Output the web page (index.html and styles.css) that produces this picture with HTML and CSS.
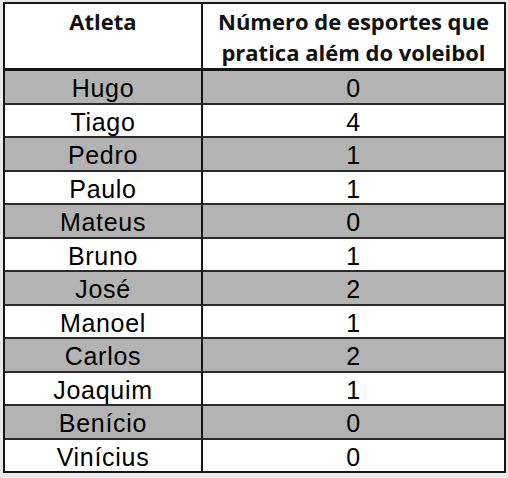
FILE: index.html
```html
<!DOCTYPE html>
<html lang="pt">
<head>
<meta charset="utf-8">
<link rel="stylesheet" href="styles.css">
</head>
<body>
<div class="wrap">
<table class="sports">
  <thead>
    <tr>
      <th class="c1">Atleta</th>
      <th class="c2">Número de esportes que<br>pratica além do voleibol</th>
    </tr>
  </thead>
  <tbody>
    <tr class="g"><td>Hugo</td><td>0</td></tr>
    <tr><td>Tiago</td><td>4</td></tr>
    <tr class="g"><td>Pedro</td><td>1</td></tr>
    <tr><td>Paulo</td><td>1</td></tr>
    <tr class="g"><td>Mateus</td><td>0</td></tr>
    <tr><td>Bruno</td><td>1</td></tr>
    <tr class="g"><td>José</td><td>2</td></tr>
    <tr><td>Manoel</td><td>1</td></tr>
    <tr class="g"><td>Carlos</td><td>2</td></tr>
    <tr><td>Joaquim</td><td>1</td></tr>
    <tr class="g"><td>Benício</td><td>0</td></tr>
    <tr><td>Vinícius</td><td>0</td></tr>
  </tbody>
</table>
</div>
</body>
</html>
```

FILE: styles.css
```css
html, body {
  margin: 0;
  padding: 0;
  background: #e9e9e9;
  width: 508px;
  height: 478px;
  overflow: hidden;
}
.wrap {
  padding: 2px 0 0 3px;
}
.sports {
  border-collapse: separate;
  border-spacing: 0;
  width: 503px;
  border: 2px solid #151515;
  background: #fff;
  table-layout: fixed;
}
.sports th {
  font-family: "Open Sans", Lato, sans-serif;
  font-weight: 700;
  font-size: 22px;
  line-height: 31px;
  color: #111;
  height: 62px;
  padding: 2px 0 0;
  border-bottom: 3px solid #151515;
  vertical-align: top;
}
.sports th.c1, .sports td:first-child {
  width: 196px;
  border-right: 2px solid #151515;
}
.sports td {
  font-family: "Liberation Sans", Arial, sans-serif;
  font-size: 25px;
  letter-spacing: 0.7px;
  color: #000;
  text-align: center;
  padding: 3px 0 0;
  height: 28.5px;
  line-height: 28px;
  border-bottom: 2px solid #2a2a2a;
}
.sports tbody tr:last-child td {
  border-bottom: 0;
}
.sports tr.g td {
  background: #b3b3b3;
}
```
